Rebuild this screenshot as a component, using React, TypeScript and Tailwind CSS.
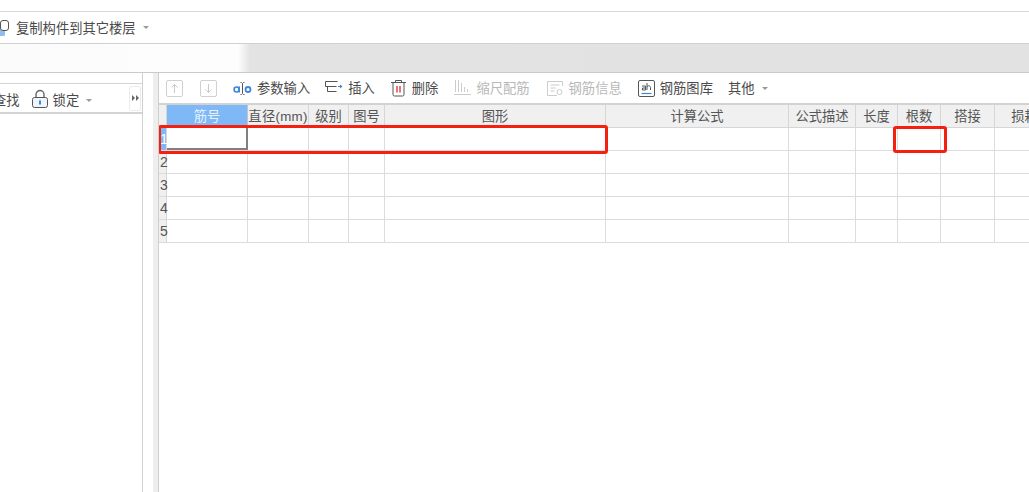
const FONT = '"Liberation Sans", "Noto Sans CJK SC", sans-serif';

const columns: [string, number][] = [
  ['筋号', 81],
  ['直径(mm)', 61],
  ['级别', 40],
  ['图号', 36],
  ['图形', 221],
  ['计算公式', 183],
  ['公式描述', 67],
  ['长度', 42],
  ['根数', 43],
  ['搭接', 54],
  ['损耗', 60],
];

function ArrowBox({ down, className }: { down?: boolean; className?: string }) {
  return (
    <svg width="18" height="18" viewBox="0 0 18 18" fill="none" className={`shrink-0 ${className ?? ''}`}>
      <rect x="1.5" y="1.5" width="16" height="16" rx="1.5" stroke="#d0d0d0" />
      <path d={down ? 'M9.5 5v8.5M6.5 10.5l3 3 3-3' : 'M9.5 14V5.5M6.5 8.5l3-3 3 3'} stroke="#c8c8c8" />
    </svg>
  );
}

function ToolItem({ icon, label, muted, className }: { icon: React.ReactNode; label: string; muted?: boolean; className?: string }) {
  return (
    <div className={`flex items-center gap-[5px] ${className ?? ''}`}>
      {icon}
      <span className={`mt-[2px] text-[13.3px] leading-none whitespace-nowrap ${muted ? 'text-[#b8b8b8]' : 'text-[#4a4a4a]'}`}>{label}</span>
    </div>
  );
}

function Caret() {
  return <span className="ml-[7px] w-0 h-0 border-x-[3px] border-x-transparent border-t-[3px] border-t-[#999999]" />;
}

function GridTable() {
  return (
    <div className="flex flex-col">
      <div className="flex h-[23px] border-b border-[#d6d6d6] bg-[#f0f0f0]">
        <div className="w-[8px] shrink-0 border-r border-[#d6d6d6]" />
        {columns.map(([name, w], i) => (
          <div
            key={name}
            style={{ width: w }}
            className={`shrink-0 flex items-center justify-center pt-[1px] text-[13.3px] leading-none whitespace-nowrap border-r ${
              i === 0 ? 'bg-[#7eb8f7] text-[#e8f2fd] border-[#c4c4c4]' : 'text-[#555555] border-[#d6d6d6]'
            } ${i === 1 ? 'tracking-[0.3px]' : ''}`}
          >
            {name}
          </div>
        ))}
      </div>
      {[1, 2, 3, 4, 5].map((n) => (
        <div key={n} className="flex h-[23px] border-b border-[#dcdcdc]">
          <div
            className={`w-[8px] shrink-0 flex items-center pl-[1px] text-[14px] leading-none border-r border-[#d6d6d6] ${
              n === 1 ? 'bg-[#7eb8f7] text-white' : 'bg-[#f0f0f0] text-[#555555]'
            }`}
          >
            {n}
          </div>
          {columns.map(([name, w], i) => (
            <div
              key={name}
              style={{ width: w }}
              className={`shrink-0 ${
                n === 1 && i === 0 ? 'border-r-2 border-b-2 border-[#808080]' : 'border-r border-[#dcdcdc]'
              }`}
            />
          ))}
        </div>
      ))}
    </div>
  );
}

export default function App() {
  return (
    <div className="w-[1029px] h-[492px] overflow-hidden bg-white flex flex-col" style={{ fontFamily: FONT }}>
      <div className="h-[11px] shrink-0 border-b border-[#d8d8d8] box-content" />
      <div className="h-[31px] shrink-0 flex items-center border-b border-[#d0d0d0] box-content">
        <svg width="14" height="18" viewBox="0 0 14 18" fill="none" className="shrink-0 -ml-[2px] mr-[4px]">
          <rect x="0" y="9" width="7" height="8" rx="1.5" fill="#8fbdf0" />
          <rect x="2.5" y="1.5" width="8" height="10" rx="2.5" fill="white" stroke="#555555" />
        </svg>
        <span className="mt-[2px] text-[13.3px] leading-none text-[#4a4a4a]">复制构件到其它楼层</span>
        <Caret />
      </div>
      <div className="h-[28px] shrink-0 border-b border-[#c8cbcd] box-content bg-[linear-gradient(90deg,#fbfbfb_0,#fdfdfd_238px,#e3e3e3_250px,#e2e2e2_100%)]" />
      <div className="flex-1 flex min-h-0">
        <div className="w-[143px] shrink-0 pt-[10px] bg-white border-r border-[#d0d0d0]">
          <div className="h-[31px] border-t border-b-2 border-[#d4d4d4] flex items-center pt-[4px]">
            <span className="mt-[2px] text-[13.3px] leading-none text-[#4a4a4a] whitespace-nowrap -ml-[7px]">查找</span>
            <svg width="18" height="20" viewBox="0 0 18 20" fill="none" className="ml-[11px] mr-[4px] -mt-[3px] shrink-0">
              <path d="M5 9V5.5a4 4 0 0 1 8 0V9" stroke="#666666" strokeWidth="1.4" />
              <rect x="1.5" y="8.5" width="15" height="10" rx="2" fill="#eef5fd" stroke="#555555" />
              <rect x="8" y="11.5" width="2" height="4" fill="#3f86d8" />
            </svg>
            <span className="mt-[2px] text-[13.3px] leading-none text-[#4a4a4a]">锁定</span>
            <Caret />
            <div className="ml-auto mr-[1px] -mt-[4px] w-[12px] h-[25px] border border-[#ececec] rounded-[2px] flex items-center justify-center gap-[1px]">
              <span className="w-0 h-0 border-y-[3px] border-y-transparent border-l-[3px] border-l-[#666666]" />
              <span className="w-0 h-0 border-y-[3px] border-y-transparent border-l-[3px] border-l-[#666666]" />
            </div>
          </div>
        </div>
        <div className="w-[10px] shrink-0 bg-white" />
        <div className="w-[6px] shrink-0 bg-[#eeeeee] border-r border-[#cfcfcf]" />
        <div className="flex-1 min-w-0 relative overflow-hidden">
          <div className="h-[30px] flex items-center border-b-2 border-[#d2d2d2] box-content pl-[6px]">
            <ArrowBox />
            <ArrowBox down className="ml-[16px]" />
            <ToolItem
              className="ml-[16px]"
              icon={
                <svg width="19" height="18" viewBox="0 0 19 18" fill="none" className="shrink-0">
                  <circle cx="3.6" cy="10.5" r="2.5" stroke="#3f86d8" strokeWidth="1.6" />
                  <path d="M6.3 7.5v6" stroke="#3f86d8" strokeWidth="1.4" />
                  <path d="M7.5 3.5h1l1 1 1-1h1M7.5 15.5h1l1-1 1 1h1M9.5 4.5v10" stroke="#555555" />
                  <circle cx="15" cy="10.5" r="2.5" stroke="#3f86d8" strokeWidth="1.8" />
                </svg>
              }
              label="参数输入"
            />
            <ToolItem
              className="ml-[15px]"
              icon={
                <svg width="18" height="16" viewBox="0 0 18 16" fill="none" className="shrink-0">
                  <path d="M12.5 1.5H.5v5h11" stroke="#555555" />
                  <path d="M2.5 6.5v5h9" stroke="#555555" />
                  <path d="M13 6.5h3" stroke="#3f86d8" />
                  <path d="M15 4.5l2.5 2-2.5 2z" fill="#3f86d8" />
                </svg>
              }
              label="插入"
            />
            <ToolItem
              className="ml-[15px]"
              icon={
                <svg width="17" height="18" viewBox="0 0 17 18" fill="none" className="shrink-0">
                  <path d="M1 3.5h15M5.5 3.5V1.5h6v2" stroke="#555555" />
                  <path d="M3 3.5v12a1.5 1.5 0 0 0 1.5 1.5h8a1.5 1.5 0 0 0 1.5-1.5v-12" stroke="#555555" />
                  <path d="M7 7v6.5M10 7v6.5" stroke="#e03c3c" strokeWidth="1.4" />
                </svg>
              }
              label="删除"
            />
            <ToolItem
              className="ml-[16px]"
              muted
              icon={
                <svg width="17" height="16" viewBox="0 0 17 16" fill="none" className="shrink-0">
                  <path d="M1.5 0v12M4.5 0v12M7.5 3v9M10.5 7v5M13.5 9v3M0 14.5h17" stroke="#cccccc" />
                </svg>
              }
              label="缩尺配筋"
            />
            <ToolItem
              className="ml-[17px]"
              muted
              icon={
                <svg width="17" height="17" viewBox="0 0 17 17" fill="none" className="shrink-0">
                  <path d="M15.5 6V1.5h-15v14H10" stroke="#cccccc" />
                  <path d="M3.5 5h9M3.5 8h5M3.5 11h4" stroke="#cccccc" />
                  <circle cx="12.5" cy="12" r="2.5" stroke="#cccccc" />
                </svg>
              }
              label="钢筋信息"
            />
            <ToolItem
              className="ml-[16px]"
              icon={
                <svg width="17" height="17" viewBox="0 0 17 17" fill="none" className="shrink-0">
                  <rect x="0.5" y="0.5" width="16" height="16" rx="1.5" stroke="#555555" />
                  <path d="M4 6h3.5v4h-3V8h3M9 3v7M9 6.5c2-1.5 3.5-.5 3.5 1v2.5" stroke="#555555" />
                  <path d="M3.5 13.5h10" stroke="#3f86d8" strokeWidth="1.2" />
                </svg>
              }
              label="钢筋图库"
            />
            <span className="mt-[2px] ml-[15px] text-[13.3px] leading-none text-[#4a4a4a]">其他</span>
            <Caret />
          </div>
          <GridTable />
          <div className="absolute left-[-1px] top-[52px] w-[450px] h-[29px] border-[3px] border-[#f5200f] rounded-[3px]" />
          <div className="absolute left-[734px] top-[53px] w-[54px] h-[27px] border-[3px] border-[#f5200f] rounded-[3px]" />
        </div>
      </div>
    </div>
  );
}
